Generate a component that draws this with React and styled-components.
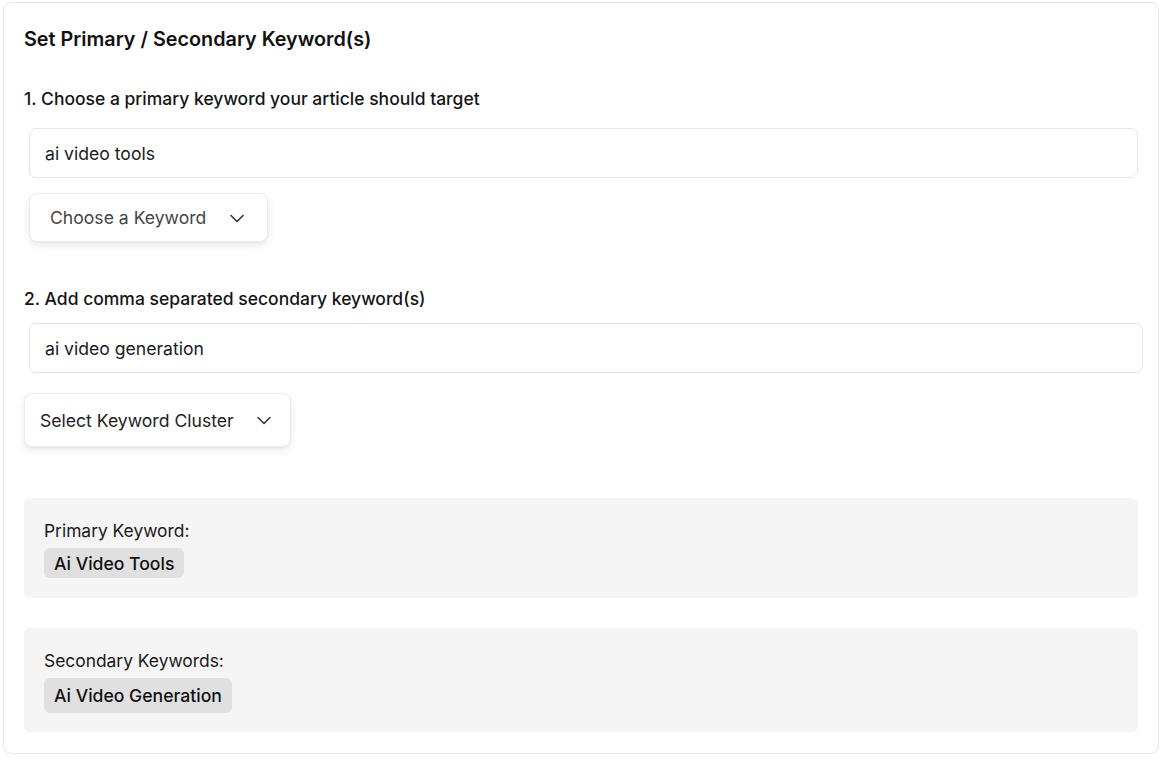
import React from "react";
import styled, { createGlobalStyle } from "styled-components";

const Global = createGlobalStyle`
  html, body { margin: 0; padding: 0; background: #ffffff; }
  body { font-family: Inter, "Noto Sans", sans-serif; color: #111111; }
  * { box-sizing: border-box; }
`;

const Card = styled.section`
  margin: 2px 0 0 3px;
  width: 1156px;
  height: 752px;
  border: 1px solid #e6e6e6;
  border-radius: 8px;
  padding: 21px 20px 20px 20px;
  display: flex;
  flex-direction: column;
`;

const Title = styled.h2`
  margin: 0;
  font-size: 19.8px;
  line-height: 30px;
  font-weight: 600;
  color: #111111;
`;

const Label = styled.div`
  font-size: 17.5px;
  line-height: 26px;
  font-weight: 500;
  color: #151515;
  margin-top: ${(p) => p.$top}px;
`;

const Input = styled.input`
  display: block;
  margin: ${(p) => p.$top}px ${(p) => p.$right}px 0 5px;
  height: 50px;
  border: 1px solid #e5e5e5;
  border-radius: 7px;
  padding: 0 15px;
  font-family: Inter, "Noto Sans", sans-serif;
  font-size: 17.6px;
  color: #1a1a1a;
  background: #ffffff;
  outline: none;
`;

const Dropdown = styled.button`
  align-self: flex-start;
  display: flex;
  align-items: center;
  justify-content: space-between;
  margin: ${(p) => p.$top}px 0 0 ${(p) => p.$left}px;
  width: ${(p) => p.$w}px;
  height: ${(p) => p.$h}px;
  padding: 0 ${(p) => p.$pr}px 0 ${(p) => p.$pl}px;
  border: 1px solid #ececec;
  border-radius: 8px;
  background: #ffffff;
  box-shadow: 0 4px 10px rgba(0, 0, 0, 0.08), 0 1px 2px rgba(0, 0, 0, 0.04);
  font-family: Inter, "Noto Sans", sans-serif;
  font-size: 17.6px;
  color: ${(p) => p.$color};
  cursor: pointer;
`;

const Chevron = () => (
  <svg width="24" height="24" viewBox="0 0 24 24" fill="none" stroke="#333" strokeWidth="1.6" strokeLinecap="round" strokeLinejoin="round">
    <path d="m6 9.5 6 6 6-6" />
  </svg>
);

const Summary = styled.div`
  margin-top: ${(p) => p.$top}px;
  height: ${(p) => p.$h}px;
  background: #f5f5f5;
  border-radius: 6px;
  padding: 20px 20px 0 20px;
  display: flex;
  flex-direction: column;
  align-items: flex-start;
`;

const SummaryLabel = styled.div`
  font-size: 17.4px;
  line-height: 26px;
  color: #1a1a1a;
`;

const Chip = styled.span`
  margin-top: 4px;
  height: ${(p) => p.$h}px;
  display: inline-flex;
  align-items: center;
  padding: 0 10px;
  background: #e0e0e0;
  border-radius: 6px;
  font-size: 17.6px;
  font-weight: 500;
  color: #111111;
`;

export default function App() {
  return (
    <>
      <Global />
      <Card>
        <Title>Set Primary / Secondary Keyword(s)</Title>
        <Label $top={32}>1. Choose a primary keyword your article should target</Label>
        <Input $top={16} $right={0} defaultValue="ai video tools" />
        <Dropdown $top={15} $left={5} $w={239} $h={49} $pl={20} $pr={18} $color="#444444">
          <span>Choose a Keyword</span>
          <Chevron />
        </Dropdown>
        <Label $top={44}>2. Add comma separated secondary keyword(s)</Label>
        <Input $top={11} $right={-5} defaultValue="ai video generation" />
        <Dropdown $top={20} $left={0} $w={267} $h={54} $pl={15} $pr={14} $color="#222222">
          <span>Select Keyword Cluster</span>
          <Chevron />
        </Dropdown>
        <Summary $top={51} $h={100}>
          <SummaryLabel>Primary Keyword:</SummaryLabel>
          <Chip $h={30}>Ai Video Tools</Chip>
        </Summary>
        <Summary $top={30} $h={104}>
          <SummaryLabel>Secondary Keywords:</SummaryLabel>
          <Chip $h={35}>Ai Video Generation</Chip>
        </Summary>
      </Card>
    </>
  );
}
